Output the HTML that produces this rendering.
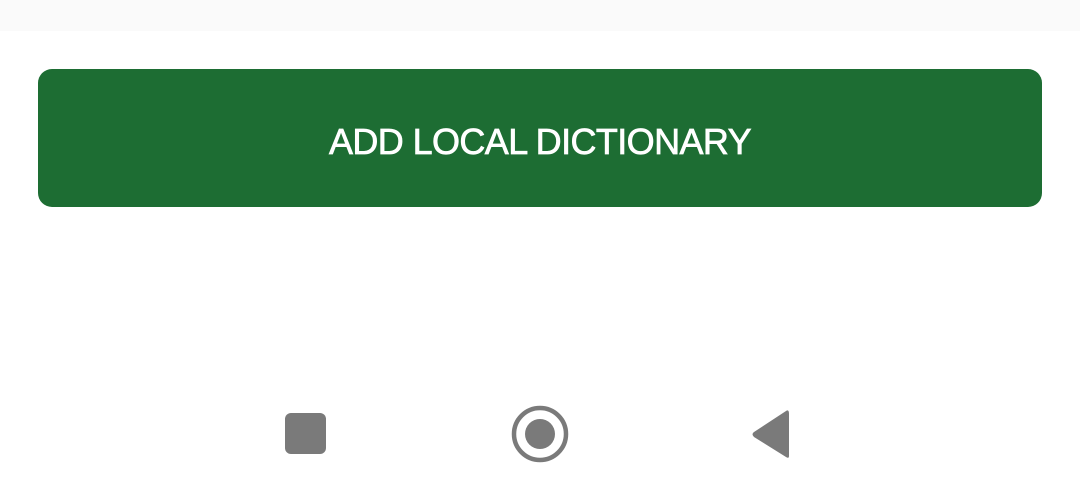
<!DOCTYPE html>
<html><head><style>
html,body{margin:0;padding:0;width:1080px;height:502px;background:#fff;overflow:hidden;font-family:"Liberation Sans",sans-serif}
.top{position:absolute;left:0;top:0;width:1080px;height:31px;background:#fafafa}
.btn{position:absolute;left:38px;top:69px;width:1004px;height:138px;background:#1d6d33;border-radius:14px;color:#fff;text-align:center;line-height:146px;font-size:36px;letter-spacing:-0.6px;-webkit-text-stroke:0.7px #fff}
</style></head><body>
<div class="top"></div>
<div class="btn">ADD LOCAL DICTIONARY</div>
<svg style="position:absolute;left:0;top:0" width="1080" height="502">
<rect x="285" y="413" width="41" height="41" rx="6" fill="#7a7a7a"/>
<circle cx="540" cy="434" r="26" fill="none" stroke="#7a7a7a" stroke-width="4.5"/>
<circle cx="540" cy="434" r="15" fill="#7a7a7a"/>
<path d="M789 414 L789 456 Q789 459 786 457 L754 437 Q751 434 754 432 L786 411 Q789 409 789 414Z" fill="#7a7a7a"/>
</svg>
</body></html>
